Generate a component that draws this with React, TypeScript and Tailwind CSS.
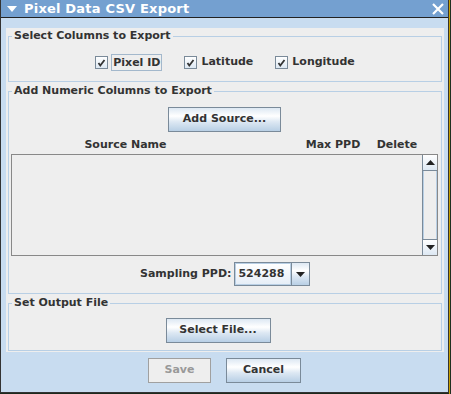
import React from 'react';

const font = "font-['DejaVu_Sans',sans-serif]";
const btn =
  'h-[25px] border border-[#7a8a99] bg-[linear-gradient(to_bottom,#dde8f3,#ffffff_35%,#dde8f3_60%,#b8cfe5)] text-[11px] font-bold text-[#333] flex items-center justify-center';

function Check() {
  return (
    <div className="w-[13px] h-[13px] border border-[#7a8a99] bg-[linear-gradient(to_bottom,#ffffff,#dde8f3)] flex items-center justify-center">
      <svg width="11" height="11" viewBox="0 0 11 11">
        <path d="M2.5 6 L4.3 8.5 L8.5 3" fill="none" stroke="#333" strokeWidth="1.8" />
      </svg>
    </div>
  );
}

function Arrow({ up }: { up?: boolean }) {
  return (
    <svg width="9" height="5" viewBox="0 0 9 5">
      <path d={up ? 'M0 5 L4.5 0 L9 5 Z' : 'M0 0 L9 0 L4.5 5 Z'} fill="#222" />
    </svg>
  );
}

function Group({ title, children }: { title: string; children: React.ReactNode }) {
  return (
    <fieldset className="border border-[#b8cfe5]">
      <legend className="ml-[3px] px-[2px] text-[11px] font-bold leading-[14px] text-[#333]">{title}</legend>
      {children}
    </fieldset>
  );
}

export default function App() {
  return (
    <div className={`w-[451px] h-[394px] flex bg-[#1d2a1d] ${font}`}>
      <div className="w-[449px] h-[393px] flex flex-col border-l border-r border-b border-[#333]">
        {/* Title bar */}
        <div className="h-[18px] bg-[#74a0d0] border-b border-[#222] flex items-center pl-[6px] pr-[4px]">
          <svg width="10" height="6" viewBox="0 0 10 6" className="mr-[7px]">
            <path d="M0 0 L10 0 L5 6 Z" fill="#fff" />
          </svg>
          <span className="text-white text-[13px] font-bold leading-[17px] tracking-[0.2px]">Pixel Data CSV Export</span>
          <svg width="12" height="12" viewBox="0 0 12 12" className="ml-auto">
            <path d="M1 1 L11 11 M11 1 L1 11" stroke="#fff" strokeWidth="2.2" />
          </svg>
        </div>

        {/* Frame */}
        <div className="flex-1 bg-[#c8dcf0] pt-[10px] pl-[5px] pr-[4px] flex flex-col">
          <div className="h-[324px] bg-[#eeeeee] px-[2px] pt-[1px] flex flex-col gap-[2px]">
            <Group title="Select Columns to Export">
              <div className="h-[38px] pt-[1px] flex items-center justify-center text-[11px] font-bold text-[#333]">
                <div className="flex items-center">
                  <Check />
                  <span className="ml-[3px] px-[1px] h-[17px] leading-[15px] border border-[#a3b8cc]">Pixel ID</span>
                </div>
                <div className="flex items-center ml-[22px]">
                  <Check />
                  <span className="ml-[4px]">Latitude</span>
                </div>
                <div className="flex items-center ml-[22px]">
                  <Check />
                  <span className="ml-[4px]">Longitude</span>
                </div>
              </div>
            </Group>

            <Group title="Add Numeric Columns to Export">
              <div className="pl-[2px] pr-[3px] pt-[9px] pb-[7px] flex flex-col">
                <div className="flex justify-center">
                  <button className={`${btn} w-[113px]`}>Add Source...</button>
                </div>
                <div className="mt-[5px] h-[16px] flex text-[11px] font-bold leading-[16px] text-[#333]">
                  <div className="w-[229px] text-center">Source Name</div>
                  <div className="w-[63px]" />
                  <div className="w-[60px] text-center">Max PPD</div>
                  <div className="w-[9px]" />
                  <div className="w-[50px] text-center">Delete</div>
                </div>
                <div className="mt-[1px] h-[102px] border border-[#888] flex">
                  <div className="flex-1" />
                  <div className="w-[15px] flex flex-col border-l border-[#7a8a99]">
                    <div className="h-[16px] border-b border-[#7a8a99] bg-[linear-gradient(to_bottom,#ffffff,#dde8f3)] flex items-center justify-center">
                      <Arrow up />
                    </div>
                    <div className="flex-1 bg-[#eeeeee] border-l border-r border-[#b8cfe5]" />
                    <div className="h-[16px] border-t border-[#7a8a99] bg-[linear-gradient(to_bottom,#ffffff,#dde8f3)] flex items-center justify-center">
                      <Arrow />
                    </div>
                  </div>
                </div>
                <div className="mt-[6px] flex items-center pl-[129px]">
                  <span className="text-[11px] font-bold text-[#333]">Sampling PPD:</span>
                  <div className="ml-[3px] h-[24px] w-[76px] flex border border-[#7a8a99]">
                    <div className="w-[56px] border border-[#b8cfe5] bg-[linear-gradient(to_bottom,#ffffff,#e6eef7)] flex items-center pl-[2px] text-[11px] font-bold text-[#333]">
                      524288
                    </div>
                    <div className="flex-1 border-l border-[#7a8a99] bg-[linear-gradient(to_bottom,#dde8f3,#ffffff_35%,#dde8f3_60%,#b8cfe5)] flex items-center justify-center">
                      <Arrow />
                    </div>
                  </div>
                </div>
              </div>
            </Group>

            <Group title="Set Output File">
              <div className="pt-[8px] pb-[7px] flex justify-center pr-[14px]">
                <button className={`${btn} w-[105px]`}>Select File...</button>
              </div>
            </Group>
          </div>

          {/* Bottom buttons */}
          <div className="mt-[6px] flex justify-center gap-[15px] pr-[1px]">
            <button className="h-[25px] w-[63px] border border-[#a0a0a0] bg-[#eeeeee] text-[11px] font-bold text-[#999]">
              Save
            </button>
            <button className={`${btn} w-[75px]`}>Cancel</button>
          </div>
        </div>
      </div>
      <div className="w-[2px] flex">
        <div className="w-[1px] bg-[#c8a000]" />
        <div className="w-[1px] bg-[#203020]" />
      </div>
    </div>
  );
}
